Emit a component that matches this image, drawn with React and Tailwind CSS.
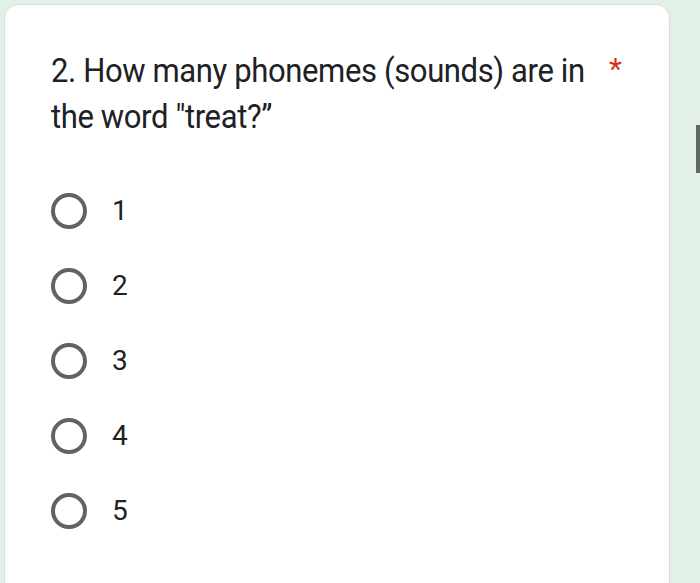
export default function App() {
  const options = ["1", "2", "3", "4", "5"];
  return (
    <div
      className="flex h-[583px] w-[700px] overflow-hidden bg-[#e3f0e6] pl-[4px] pt-[4px]"
      style={{ fontFamily: "Roboto, 'Liberation Sans', sans-serif" }}
    >
      <div className="h-[600px] w-[666px] rounded-t-[14px] border border-[#dadce0] bg-white pl-[46px] pr-[40px] pt-[43px]">
        <div className="flex items-start">
          <div className="w-[552px]">
            <div className="w-[588px] origin-left scale-x-[0.94] text-[33px] leading-[46px] tracking-[-0.4px] text-[#202124]">
              2. How many phonemes (sounds) are in the word "treat?”
            </div>
          </div>
          <span className="ml-[6px] -mt-[2px] text-[30px] leading-[46px] text-[#d93025]">*</span>
        </div>
        <div className="mt-[53px] flex flex-col gap-[39px]">
          {options.map((o) => (
            <div key={o} className="flex items-center">
              <div className="h-[36px] w-[36px] rounded-full border-[4px] border-[#5f6368]" />
              <span className="ml-[25px] text-[28px] leading-[36px] text-[#202124]">{o}</span>
            </div>
          ))}
        </div>
      </div>
      <div className="ml-auto mt-[121px] h-[48px] w-[4px] bg-[#5f6a63]" />
    </div>
  );
}
